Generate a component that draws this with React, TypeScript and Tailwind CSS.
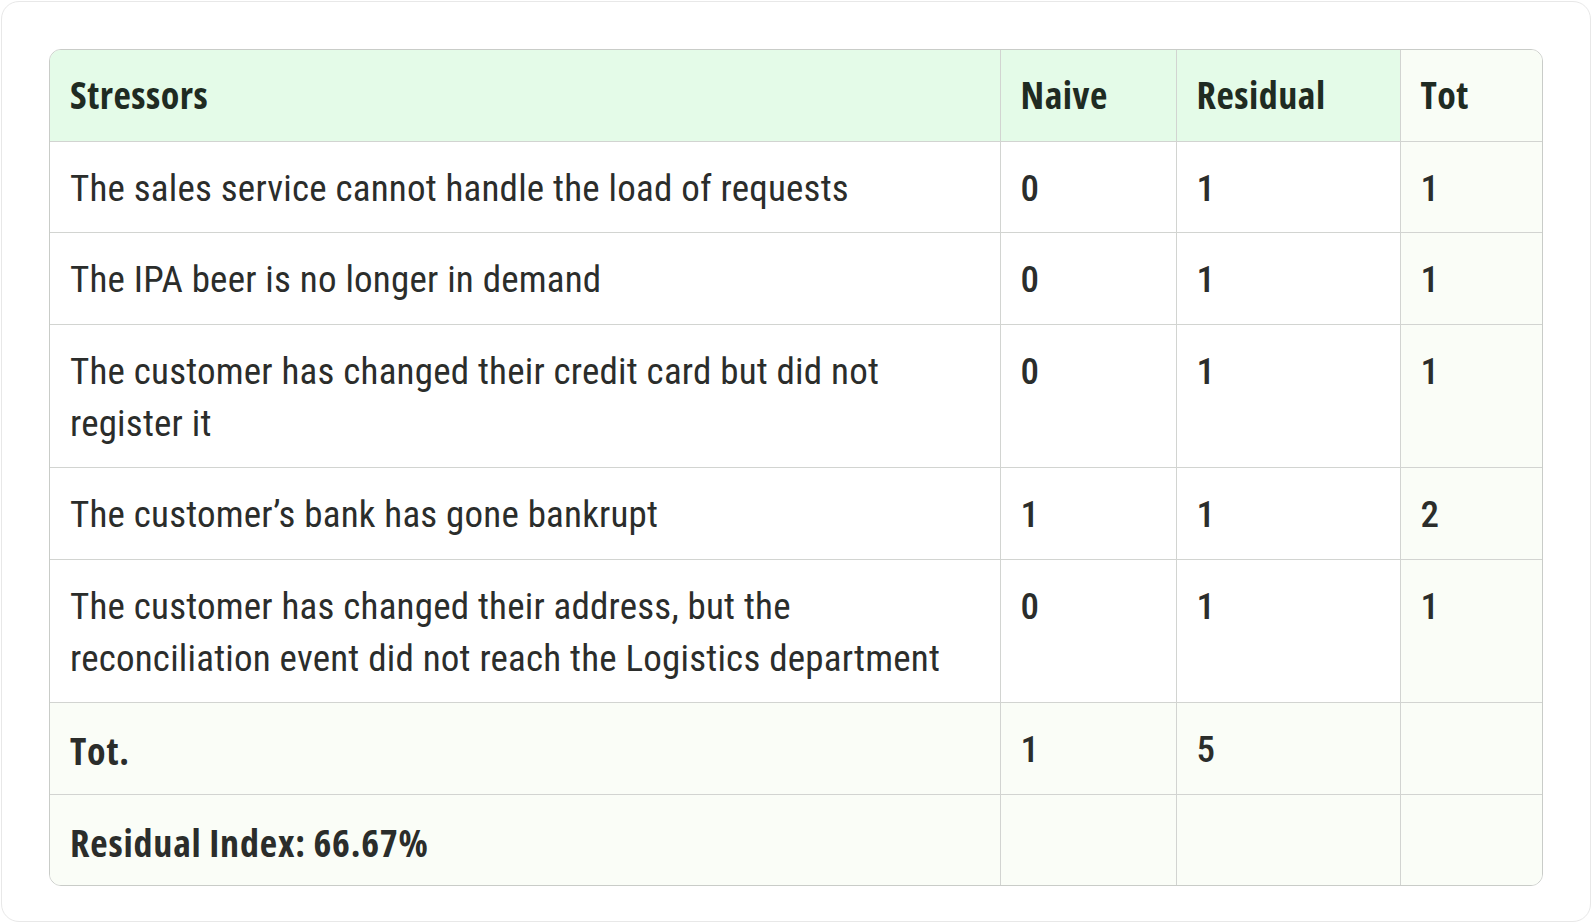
type Row = {
  label: string;
  naive: string;
  residual: string;
  tot: string;
  footer?: boolean;
};

const rows: Row[] = [
  { label: 'The sales service cannot handle the load of requests', naive: '0', residual: '1', tot: '1' },
  { label: 'The IPA beer is no longer in demand', naive: '0', residual: '1', tot: '1' },
  { label: 'The customer has changed their credit card but did not register it', naive: '0', residual: '1', tot: '1' },
  { label: 'The customer\u2019s bank has gone bankrupt', naive: '1', residual: '1', tot: '2' },
  {
    label: 'The customer has changed their address, but the reconciliation event did not reach the Logistics department',
    naive: '0',
    residual: '1',
    tot: '1',
  },
  { label: 'Tot.', naive: '1', residual: '5', tot: '', footer: true },
  { label: 'Residual Index: 66.67%', naive: '', residual: '', tot: '', footer: true },
];

const cell = 'px-5 align-top leading-[52px] border-[#d2d4d1]';
const bodyPad = 'pt-[21px] pb-[17.5px]';
const headPad = 'pt-[17.5px] pb-[21px]';
const boldFont = "font-['Open_Sans',sans-serif] [font-stretch:75%] font-bold";

export default function App() {
  return (
    <div className="w-[1592px] h-[923px] bg-white p-px font-['Roboto_Condensed','Open_Sans',sans-serif] text-[37px] text-[#2b2d2b]">
      <div className="h-[921px] rounded-[18px] border border-[#e8e8e8] px-[47px] pt-[47px]">
        <div className="overflow-hidden rounded-[12px] border border-[#c9ccc8]">
          <table className="w-full table-fixed border-collapse">
            <colgroup>
              <col className="w-[950px]" />
              <col className="w-[176px]" />
              <col className="w-[224px]" />
              <col />
            </colgroup>
            <thead>
              <tr className={`text-left text-[38px] tracking-[0.5px] text-[#1f2b22] ${boldFont}`}>
                <th className={`${cell} ${headPad} border-b border-r bg-[#e4fbe8] font-bold`}>Stressors</th>
                <th className={`${cell} ${headPad} border-b border-r bg-[#e4fbe8] font-bold`}>Naive</th>
                <th className={`${cell} ${headPad} border-b border-r bg-[#e4fbe8] font-bold`}>Residual</th>
                <th className={`${cell} ${headPad} border-b bg-[#f9fdf6] font-bold`}>Tot</th>
              </tr>
            </thead>
            <tbody>
              {rows.map((r, i) => {
                const last = i === rows.length - 1;
                const bg = r.footer ? 'bg-[#fafdf7]' : 'bg-white';
                const bb = last ? '' : 'border-b';
                return (
                  <tr key={i} className="font-normal">
                    <td
                      className={`${cell} ${bodyPad} ${bb} border-r ${bg} ${
                        r.footer ? `${boldFont} text-[38px] tracking-[0.8px]` : 'tracking-[0.2px]'
                      }`}
                    >
                      {r.label}
                    </td>
                    <td className={`${cell} ${bodyPad} ${bb} border-r ${bg} font-medium`}>{r.naive}</td>
                    <td className={`${cell} ${bodyPad} ${bb} border-r ${bg} font-medium`}>{r.residual}</td>
                    <td className={`${cell} ${bodyPad} ${bb} bg-[#fafdf7] font-medium`}>{r.tot}</td>
                  </tr>
                );
              })}
            </tbody>
          </table>
        </div>
      </div>
    </div>
  );
}
